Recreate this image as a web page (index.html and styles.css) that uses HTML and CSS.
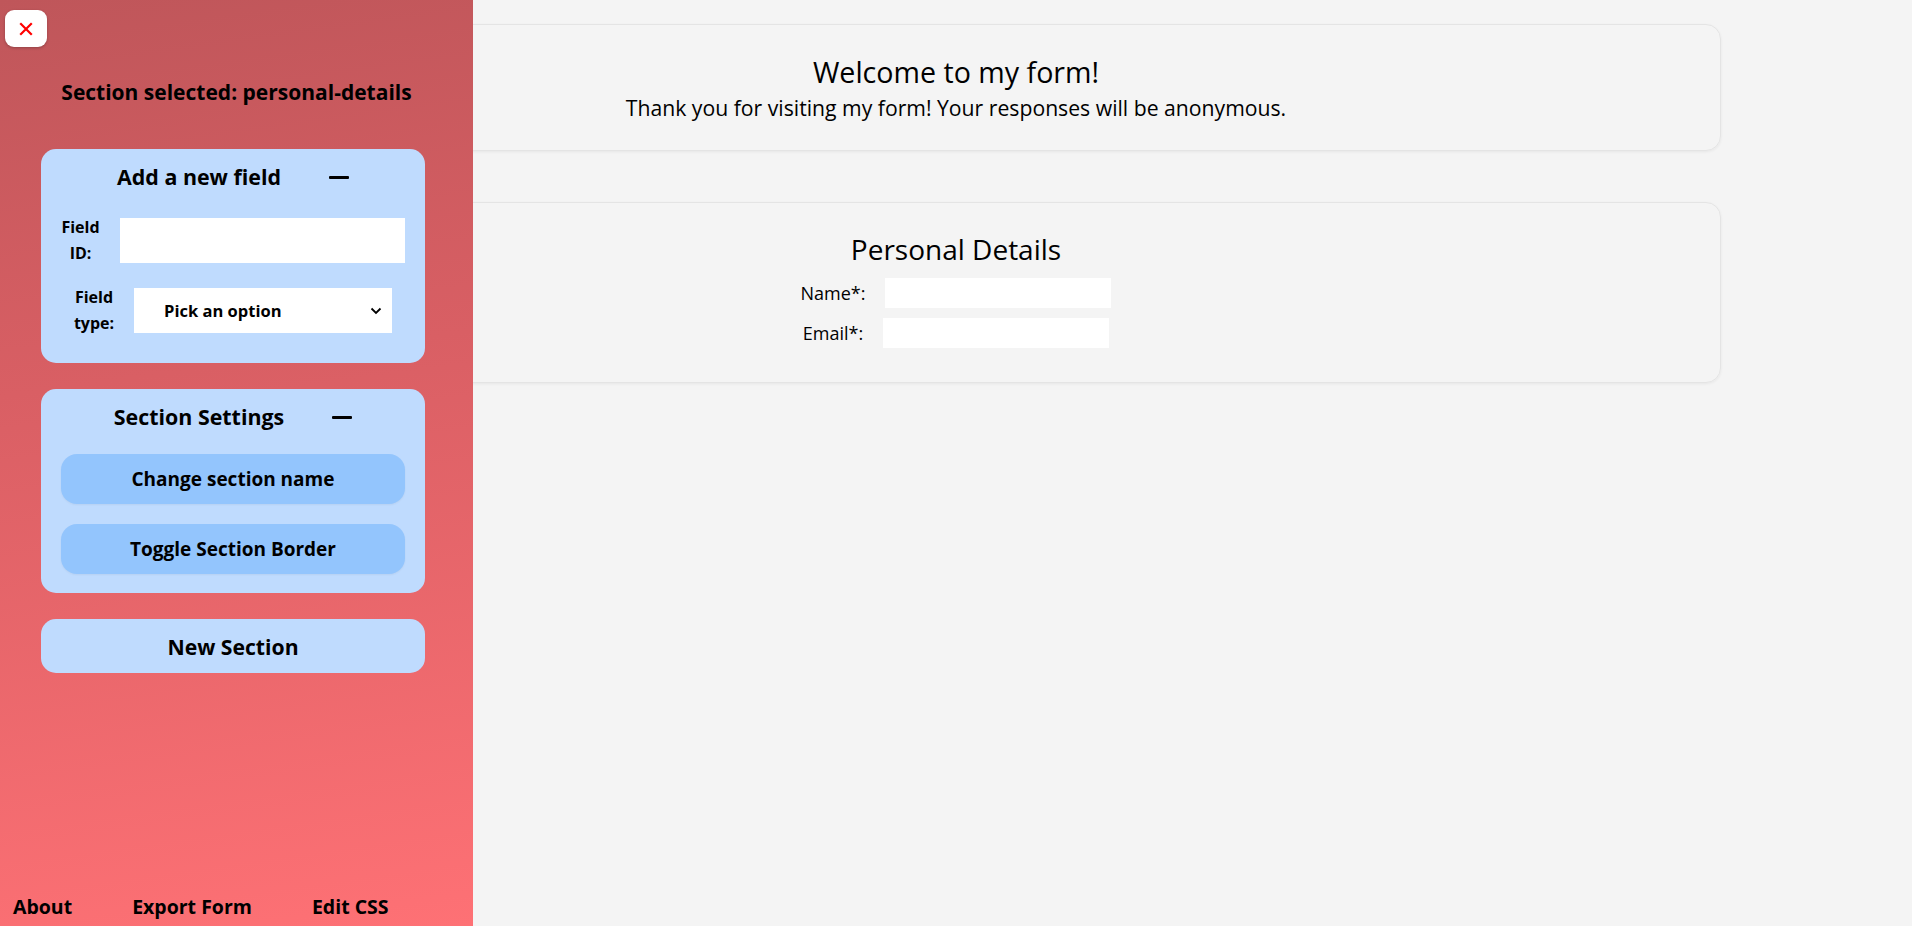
FILE: index.html
```html
<!DOCTYPE html>
<html lang="en">
<head>
<meta charset="utf-8">
<title>Form builder</title>
<link rel="stylesheet" href="styles.css">
</head>
<body>
<main class="form">
  <section class="card card-intro">
    <h1 class="card-title intro-title">Welcome to my form!</h1>
    <p class="card-sub">Thank you for visiting my form! Your responses will be anonymous.</p>
  </section>
  <section class="card card-details">
    <h2 class="card-title">Personal Details</h2>
    <div class="form-row"><label class="form-label">Name*:</label><input class="form-input name-input" type="text"></div>
    <div class="form-row"><label class="form-label">Email*:</label><input class="form-input" type="text"></div>
  </section>
</main>

<aside class="sidebar">
  <button class="close-btn" aria-label="Close">
    <svg width="14" height="14" viewBox="0 0 14 14"><path d="M2 2 L12 12 M12 2 L2 12" stroke="#ff0000" stroke-width="2.2" stroke-linecap="square"/></svg>
  </button>
  <h2 class="selected">Section selected: personal-details</h2>

  <div class="panel panel-add">
    <div class="panel-head"><span>Add a new field</span><span class="minus"></span></div>
    <div class="field-row row-id">
      <label class="field-label">Field<br>ID:</label>
      <input class="field-input" type="text">
    </div>
    <div class="field-row row-type">
      <label class="field-label">Field<br>type:</label>
      <div class="field-select"><span>Pick an option</span>
        <svg width="12" height="8" viewBox="0 0 12 8"><path d="M1.5 1.5 L6 6 L10.5 1.5" fill="none" stroke="#000" stroke-width="1.8"/></svg>
      </div>
    </div>
  </div>

  <div class="panel panel-settings">
    <div class="panel-head"><span>Section Settings</span><span class="minus"></span></div>
    <button class="panel-btn btn-first">Change section name</button>
    <button class="panel-btn">Toggle Section Border</button>
  </div>

  <button class="new-section">New Section</button>

  <nav class="footer-links">
    <a class="link-about">About</a>
    <a class="link-export">Export Form</a>
    <a class="link-css">Edit CSS</a>
  </nav>
</aside>
</body>
</html>
```
FILE: styles.css
```css
* { box-sizing: border-box; }
html, body { margin: 0; padding: 0; }
body {
  background: #f4f4f4;
  font-family: "Open Sans", "Noto Sans", sans-serif;
  color: #000;
  height: 926px;
  overflow: hidden;
}

/* main form */
.form { padding-top: 24px; }
.card {
  width: 80%;
  margin: 0 auto;
  border: 1px solid #e4e4e4;
  border-radius: 15px;
  box-shadow: 0 1px 3px rgba(0,0,0,0.06);
  text-align: center;
}
.card-intro { padding: 29px 0 29px; }
.card-details { margin-top: 51px; padding: 28px 0 34px; }
.card-title {
  margin: 0;
  font-weight: 400;
  font-size: 28px;
  line-height: 36px;
}
.intro-title { font-size: 28.6px; }
.card-sub {
  margin: 5px 0 0;
  font-size: 21.2px;
  line-height: 26px;
}
.form-row {
  display: flex;
  justify-content: center;
  align-items: center;
  gap: 20px;
  margin-top: 10px;
}
.card-details .card-title + .form-row { margin-top: 11px; }
.form-label { font-size: 18px; line-height: 24px; }
.form-input {
  width: 226px;
  height: 30px;
  border: none;
  background: #fff;
  outline: none;
}

/* sidebar */
.sidebar {
  position: fixed;
  left: 0; top: 0; bottom: 0;
  width: 473px;
  background: linear-gradient(172deg, #bf565a 0%, #d95f64 40%, #fe7175 100%);
  display: flex;
  flex-direction: column;
  align-items: flex-start;
}
.close-btn {
  margin: 10px 0 0 5px;
  width: 42px;
  height: 37px;
  border: none;
  border-radius: 9px;
  background: #fff;
  box-shadow: 0 1px 3px rgba(0,0,0,0.25);
  display: flex;
  align-items: center;
  justify-content: center;
  padding: 0;
}
.selected {
  align-self: stretch;
  margin: 31px 0 0;
  text-align: center;
  font-size: 21px;
  line-height: 28px;
  font-weight: 700;
}
.panel {
  width: 384px;
  margin-left: 41px;
  background: #bfdbfe;
  border-radius: 15px;
  display: flex;
  flex-direction: column;
  align-items: center;
}
.panel-add { margin-top: 43px; padding: 14px 0 27px; }
.panel-settings { margin-top: 26px; padding: 14px 20px 19px; }
.panel-head {
  display: flex;
  align-items: center;
  gap: 48px;
  font-size: 21.4px;
  line-height: 28px;
  font-weight: 700;
}
.minus {
  width: 20px;
  height: 3px;
  background: #000;
  border-radius: 1px;
}
.field-row {
  display: flex;
  align-items: center;
  gap: 20px;
}
.row-id { margin-top: 24px; }
.row-type { margin-top: 19px; }
.field-label {
  text-align: center;
  font-size: 16px;
  line-height: 25.5px;
  font-weight: 700;
}
.field-input {
  width: 285px;
  height: 45px;
  border: none;
  background: #fff;
  outline: none;
}
.field-select {
  width: 258px;
  height: 45px;
  background: #fff;
  display: flex;
  align-items: center;
  justify-content: space-between;
  padding: 0 10px 0 30px;
  font-size: 16.5px;
  font-weight: 700;
}
.panel-btn {
  width: 100%;
  height: 50px;
  border: none;
  border-radius: 16px;
  background: #93c5fd;
  font-family: inherit;
  font-size: 19px;
  font-weight: 700;
  color: #000;
  box-shadow: 0 1px 2px rgba(0,0,0,0.05);
}
.btn-first { margin-top: 23px; }
.panel-btn + .panel-btn { margin-top: 20px; }
.new-section {
  width: 384px;
  height: 54px;
  margin: 26px 0 0 41px;
  border: none;
  border-radius: 15px;
  background: #bfdbfe;
  font-family: inherit;
  font-size: 21.2px;
  font-weight: 700;
  color: #000;
}
.footer-links {
  margin-top: auto;
  padding: 0 0 7px 13px;
  display: flex;
  gap: 60px;
  font-size: 19.5px;
  line-height: 24px;
  font-weight: 700;
}
.footer-links a { color: #000; }
```
